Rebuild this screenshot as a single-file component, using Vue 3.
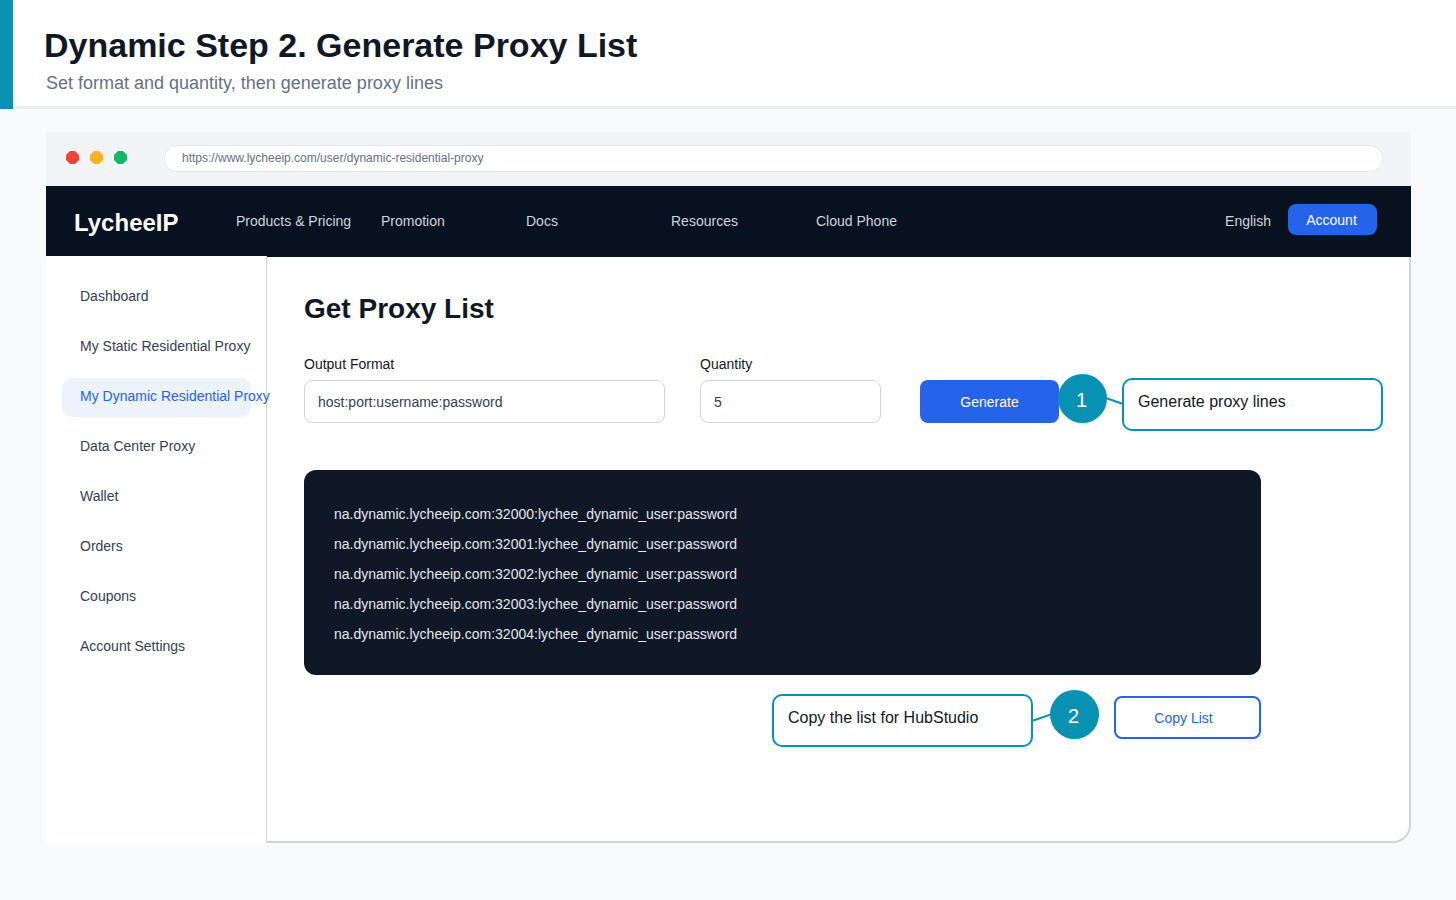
<script setup>
import { ref } from 'vue'

const navItems = ['Products & Pricing', 'Promotion', 'Docs', 'Resources', 'Cloud Phone']
const sideItems = [
  'Dashboard',
  'My Static Residential Proxy',
  'My Dynamic Residential Proxy',
  'Data Center Proxy',
  'Wallet',
  'Orders',
  'Coupons',
  'Account Settings',
]
const active = 'My Dynamic Residential Proxy'
const format = ref('host:port:username:password')
const quantity = ref('5')
const lines = [0, 1, 2, 3, 4].map(
  (n) => `na.dynamic.lycheeip.com:3200${n}:lychee_dynamic_user:password`
)
</script>

<template>
  <div class="page">
    <header class="intro">
      <div class="intro-text">
        <h1>Dynamic Step 2. Generate Proxy List</h1>
        <p>Set format and quantity, then generate proxy lines</p>
      </div>
    </header>

    <div class="browser">
      <div class="chrome">
        <svg class="dots" width="62" height="14" viewBox="0 0 62 14" aria-hidden="true">
          <path fill="#f04438" d="M4 0h5l4 4v5l-4 4H4L0 9V4z" />
          <path fill="#fdb022" d="M28 0h5l4 4v5l-4 4h-5l-4-4V4z" />
          <path fill="#12b76a" d="M52 0h5l4 4v5l-4 4h-5l-4-4V4z" />
        </svg>
        <input
          class="address"
          type="text"
          aria-label="Address"
          value="https://www.lycheeip.com/user/dynamic-residential-proxy"
        />
      </div>

      <div class="navbar">
        <a class="brand" href="#">LycheeIP</a>
        <nav class="nav">
          <a v-for="item in navItems" :key="item" href="#">{{ item }}</a>
        </nav>
        <a class="language" href="#">English</a>
        <button class="account" type="button">Account</button>
      </div>

      <div class="body">
        <nav class="sidebar">
          <a
            v-for="item in sideItems"
            :key="item"
            href="#"
            :class="{ active: item === active }"
          >{{ item }}</a>
        </nav>

        <main class="content">
          <h2>Get Proxy List</h2>

          <form class="form" @submit.prevent>
            <div class="field format">
              <label for="format">Output Format</label>
              <input id="format" v-model="format" type="text" />
            </div>
            <div class="field quantity">
              <label for="quantity">Quantity</label>
              <input id="quantity" v-model="quantity" type="text" />
            </div>
            <button class="generate" type="submit">Generate</button>
            <div class="callout first">
              <span class="step">1</span>
              <svg width="15" height="57" viewBox="0 0 15 57" aria-hidden="true">
                <path d="M-1 24L16 30" />
              </svg>
              <span class="note">Generate proxy lines</span>
            </div>
          </form>

          <div class="output">
            <div v-for="line in lines" :key="line">{{ line }}</div>
          </div>

          <div class="actions">
            <div class="callout">
              <span class="note">Copy the list for HubStudio</span>
              <svg width="17" height="57" viewBox="0 0 17 57" aria-hidden="true">
                <path d="M-1 31L19 24" />
              </svg>
              <span class="step">2</span>
            </div>
            <button class="copy" type="button">Copy List</button>
          </div>
        </main>
      </div>
    </div>
  </div>
</template>

<style>
body {
  margin: 0;
  background: #f9fafc;
}
</style>

<style scoped>
.page,
.page * {
  box-sizing: border-box;
}

.page {
  min-height: 100vh;
  display: flex;
  flex-direction: column;
  background: #f9fafc;
  color: #101828;
  font-family: "Liberation Sans", Arial, sans-serif;
  font-size: 14px;
  line-height: 18px;
}

a {
  color: inherit;
  text-decoration: none;
  white-space: nowrap;
}

button,
input {
  font: inherit;
  outline: none;
}

button {
  padding: 0;
  border: 0;
  cursor: pointer;
}

.intro {
  border-left: 13px solid #0891b2;
}

.intro-text {
  padding: 24px 31px 11px;
  border-bottom: 3px solid #eaecf0;
  background: #fff;
}

h1,
h2,
p {
  margin: 0;
}

h1 {
  font-size: 34px;
  line-height: 42px;
}

p {
  padding: 5px 2px 0;
  color: #667085;
  font-size: 18px;
  line-height: 24px;
}

.browser {
  flex: 1;
  display: flex;
  flex-direction: column;
  margin: 23px 45px 57px 46px;
}

.chrome {
  display: flex;
  align-items: center;
  height: 54px;
  padding: 0 28px 2px 20px;
  background: #f2f4f7;
}

.dots {
  margin-right: 36px;
}

.address {
  flex: 1;
  height: 27px;
  padding: 0 17px;
  border: 1px solid #e4e7ec;
  border-radius: 13px;
  background: #fff;
  color: #667085;
  font-size: 12px;
}

.navbar {
  display: flex;
  align-items: center;
  height: 71px;
  padding: 0 34px 2px 28px;
  background: #07111f;
  color: #d0d5dd;
}

.brand {
  width: 162px;
  padding-top: 4px;
  color: #fff;
  font-size: 24px;
  font-weight: 700;
  line-height: 28px;
}

.nav {
  flex: 1;
  display: grid;
  grid-template-columns: repeat(5, 145px);
}

.language {
  margin-right: 17px;
}

.account {
  width: 89px;
  height: 31px;
  margin-bottom: 2px;
  padding-right: 2px;
  border-radius: 8px;
  background: #2563eb;
  color: #fff;
}

.body {
  flex: 1;
  display: flex;
}

/* The active label may run past the sidebar edge, so it stacks above the content. */
.sidebar {
  position: relative;
  z-index: 1;
  width: 221px;
  display: flex;
  flex-direction: column;
  gap: 11px;
  margin-top: -1px;
  padding: 22px 15px 0 16px;
  border-right: 1px solid #d0d5dd;
  background: #fff;
  color: #344054;
}

.sidebar a {
  height: 39px;
  padding: 9px 18px;
  border-radius: 10px;
}

.sidebar .active {
  background: #ecf3ff;
  color: #2563eb;
}

.content {
  flex: 1;
  padding: 35px 26px 0 37px;
  border: solid #d0d5dd;
  border-width: 0 2px 2px 0;
  border-bottom-right-radius: 18px;
  background: #fff;
}

h2 {
  font-size: 28px;
  line-height: 34px;
}

.form {
  display: flex;
  align-items: flex-end;
  margin-top: 29px;
}

.field {
  display: flex;
  flex-direction: column;
  gap: 7px;
}

.field input {
  width: 100%;
  height: 43px;
  padding: 0 13px;
  border: 1px solid #d0d5dd;
  border-radius: 8px;
  background: #fff;
  color: #344054;
}

.format {
  width: 361px;
  margin-right: 35px;
}

.quantity {
  width: 181px;
  margin-right: 39px;
}

.generate {
  width: 139px;
  height: 43px;
  border-radius: 8px;
  background: #2563eb;
  color: #fff;
}

.callout {
  display: flex;
  align-items: flex-start;
}

.first {
  flex: 1;
  margin: 0 0 -8px -1px;
}

.callout path {
  stroke: #0891b2;
  stroke-width: 2;
}

.step {
  width: 49px;
  height: 49px;
  padding-right: 2px;
  border-radius: 50%;
  background: #0891b2;
  color: #fff;
  font-size: 20px;
  line-height: 52px;
  text-align: center;
}

.note {
  width: 261px;
  height: 53px;
  margin-top: 4px;
  padding: 0 14px;
  border: 2px solid #0891b2;
  border-radius: 10px;
  background: #fff;
  font-size: 16px;
  line-height: 43px;
  white-space: nowrap;
}

.first .note {
  flex: 1;
}

.output {
  margin: 47px 122px 0 0;
  padding: 29px 30px 26px;
  border-radius: 12px;
  background: #101828;
  color: #e4e7ec;
  line-height: 30px;
}

.actions {
  display: flex;
  justify-content: flex-end;
  gap: 15px;
  margin: 15px 122px 0 0;
}

.copy {
  width: 147px;
  height: 43px;
  margin-top: 6px;
  padding-right: 8px;
  border: 2px solid #2563eb;
  border-radius: 8px;
  background: #fff;
  color: #2563eb;
}
</style>
